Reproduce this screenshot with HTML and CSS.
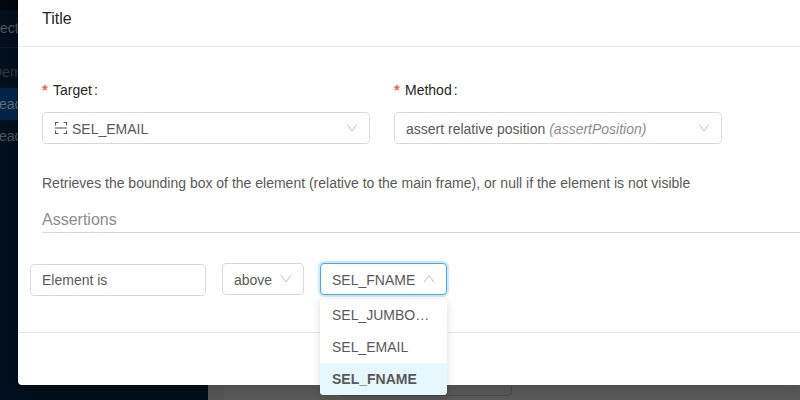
FILE: index.html
```
<!DOCTYPE html>
<html lang="en">
<head>
<meta charset="utf-8">
<title>Title</title>
<link rel="stylesheet" href="styles.css">
</head>
<body>
<div class="app">
  <aside class="sidebar">
    <div class="brand"></div>
    <div class="project"><span>ect</span></div>
    <div class="group"><span>Dem</span></div>
    <div class="item active"><span>eac</span></div>
    <div class="item"><span>eac</span></div>
  </aside>
  <main class="page"><div class="card"></div></main>
</div>
<div class="modal">
  <header class="modal-header">Title</header>
  <section class="modal-body">
    <div class="fields">
      <div class="field">
        <label class="label"><span class="star">*</span>Target<span class="colon">:</span></label>
        <div class="select">
          <svg class="scan" viewBox="0 0 14 14"><path d="M1.5 4.5v-3h3M9.5 1.5h3v3M1.5 9.5v3h3M9.5 12.5h3v-3"/><path class="bar" d="M1 7h12"/></svg>
          <span class="value">SEL_EMAIL</span>
          <svg class="arrow" viewBox="0 0 12 12"><path d="M1 2.3l5 6.7 5-6.7"/></svg>
        </div>
      </div>
      <div class="field">
        <label class="label"><span class="star">*</span>Method<span class="colon">:</span></label>
        <div class="select">
          <span class="value">assert relative position <em>(assertPosition)</em></span>
          <svg class="arrow" viewBox="0 0 12 12"><path d="M1 2.3l5 6.7 5-6.7"/></svg>
        </div>
      </div>
    </div>
    <p class="description">Retrieves the bounding box of the element (relative to the main frame), or null if the element is not visible</p>
    <h2 class="heading">Assertions</h2>
    <div class="assertion">
      <div class="input">Element is</div>
      <div class="select relation"><span class="value">above</span><svg class="arrow" viewBox="0 0 12 12"><path d="M1 2.3l5 6.7 5-6.7"/></svg></div>
      <div class="picker">
        <div class="select open"><span class="value">SEL_FNAME</span><svg class="arrow" viewBox="0 0 12 12"><path d="M1 9.3l5-6.7 5 6.7"/></svg></div>
        <div class="menu">
          <div class="option">SEL_JUMBO…</div>
          <div class="option">SEL_EMAIL</div>
          <div class="option selected">SEL_FNAME</div>
        </div>
      </div>
    </div>
  </section>
  <footer class="modal-footer"></footer>
</div>
</body>
</html>
```
FILE: styles.css
```
* { box-sizing: border-box; }
body {
  margin: 0;
  width: 800px;
  height: 400px;
  overflow: hidden;
  position: relative;
  font: 14px/22px "Liberation Sans", Arial, sans-serif;
  color: #595959;
  background: #595959;
}
.app { display: flex; height: 400px; }
.sidebar { width: 208px; background: #000f1d; color: #4d565f; white-space: nowrap; }
.brand { height: 10px; background: #00060c; }
.project { height: 38px; padding-top: 7px; border-bottom: 1px solid #0c1a27; }
.group { height: 40px; padding-top: 13px; color: #2b3742; }
.group span { margin-left: -8px; }
.item { height: 32px; line-height: 32px; }
.item span { margin-left: -1px; }
.item.active { background: #002447; color: #626970; }
.page { flex: 1; border-left: 16px solid #555; }
.card { width: 174px; height: 396px; margin-left: 114px; border: 1px solid #4a4a4a; border-radius: 4px; }
.modal {
  position: absolute;
  left: 18px;
  right: 0;
  top: -9px;
  height: 394px;
  background: #fff;
  border-radius: 4px 0 0 4px;
  box-shadow: 0 4px 12px rgba(0, 0, 0, .15);
}
.modal-header {
  height: 56px;
  padding: 17px 24px 15px;
  border-bottom: 1px solid #e8e8e8;
  font-size: 16px;
  color: #262626;
}
.modal-body { height: 285px; padding: 32px 0 0 24px; }
.fields { display: flex; gap: 24px; }
.field { width: 328px; }
.label { display: flex; height: 33px; color: #262626; }
.star { width: 11px; color: #ff4d4f; font-size: 15px; -webkit-text-stroke: .3px #ff4d4f; }
.colon { margin-left: 2px; }
.select, .input {
  display: flex;
  align-items: center;
  height: 32px;
  padding: 0 11px;
  border: 1px solid #d9d9d9;
  border-radius: 4px;
  background: #fff;
  white-space: nowrap;
}
.value { padding-top: 2px; }
.select em { color: #8c8c8c; }
.scan { width: 14px; height: 14px; margin-right: 4px; fill: none; stroke: #595959; stroke-width: 1.1; }
.scan .bar { stroke: #a6a6a6; stroke-width: 2; }
.arrow { width: 12px; height: 12px; margin-left: auto; fill: none; stroke: #bfbfbf; stroke-width: 1; }
.description { margin: 28px 0 0; }
.heading {
  height: 39px;
  margin: 0;
  padding-top: 15px;
  border-bottom: 1px solid #d9d9d9;
  font-size: 16px;
  font-weight: 400;
  color: #8c8c8c;
}
.assertion { display: flex; align-items: flex-start; gap: 16px; margin: 30px 0 0 -12px; }
.input { width: 176px; margin-top: 1px; }
.relation { width: 82px; }
.picker { width: 127px; position: relative; }
.open { border-color: #40a9ff; box-shadow: 0 0 0 2px rgba(24, 144, 255, .2); }
.menu {
  position: absolute;
  top: 36px;
  left: 0;
  width: 127px;
  background: #fff;
  border-radius: 4px;
  box-shadow: 0 2px 8px rgba(0, 0, 0, .15);
  overflow: hidden;
}
.option { height: 32px; padding: 5px 12px; white-space: nowrap; }
.selected { background: #e6f7ff; font-weight: 700; }
.modal-footer { border-top: 1px solid #e8e8e8; }
```
